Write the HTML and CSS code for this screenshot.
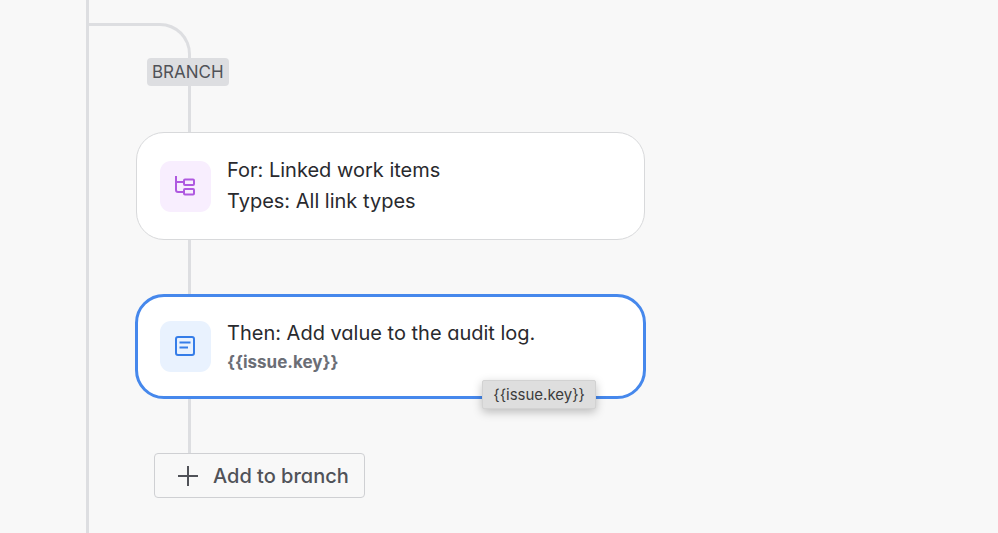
FILE: index.html
```html
<!DOCTYPE html>
<html lang="en">
<head>
    <meta charset="UTF-8">
    <meta name="viewport" content="width=device-width, initial-scale=1.0">
    <title>Automation rule</title>
    <link rel="stylesheet" href="styles.css">
</head>
<body>
    <main class="rule">
        <div class="branch-curve"></div>
        <div class="branch">
            <span class="branch-label">BRANCH</span>
            <div class="connector connector-short"></div>

            <section class="card">
                <div class="card-icon purple">
                    <svg width="21" height="21" viewBox="0 0 21 21" fill="none" stroke="currentColor" stroke-width="2">
                        <path d="M1 0v14a2 2 0 0 0 2 2h6M1 6h8"/>
                        <rect x="9" y="3.5" width="10" height="5.5" rx="1"/>
                        <rect x="9" y="13" width="10" height="5.5" rx="1"/>
                    </svg>
                </div>
                <div class="card-text">
                    <div class="card-title">For: Linked work items</div>
                    <div class="card-title">Types: All link types</div>
                </div>
            </section>

            <div class="connector"></div>

            <section class="card selected">
                <div class="card-icon blue">
                    <svg width="21" height="21" viewBox="0 0 21 21" fill="none" stroke="currentColor" stroke-width="2">
                        <rect x="1" y="1" width="18" height="18" rx="2"/>
                        <path d="M4.5 6.5h11M4.5 11.5h8.500"/>
                    </svg>
                </div>
                <div class="card-text">
                    <div class="card-title">Then: Add value to the audit log.</div>
                    <div class="card-detail">{{issue.key}}</div>
                </div>
                <div class="tooltip" role="tooltip">{{issue.key}}</div>
            </section>

            <div class="connector"></div>

            <button type="button" class="add-button">
                <svg width="22" height="22" viewBox="0 0 22 22" fill="none" stroke="currentColor" stroke-width="2">
                    <path d="M11 1v20M1 11h20"/>
                </svg>
                Add to branch
            </button>
        </div>
    </main>
</body>
</html>
```

FILE: styles.css
```css
* {
    box-sizing: border-box;
}

body {
    margin: 0;
    background: #f8f8f8;
    color: #292a2e;
    font-family: Inter, sans-serif;
    font-feature-settings: "cv11";
    font-size: 20px;
}

/* main line of the rule, the branch hangs off it */
.rule {
    min-height: 100vh;
    margin-left: 86px;
    padding: 23px 24px 24px 0;
    border-left: 3px solid #dddee1;
}

.branch-curve {
    width: 102px;
    height: 35px;
    border-top: 3px solid #dddee1;
    border-right: 3px solid #dddee1;
    border-top-right-radius: 31px;
}

.branch {
    display: flex;
    flex-direction: column;
    align-items: flex-start;
    padding-left: 47px;
}

.branch-label {
    margin-left: 11px;
    padding: 0 5px;
    border-radius: 4px;
    background: #dddee1;
    color: #505258;
    font-size: 17px;
    line-height: 28px;
}

.connector {
    width: 3px;
    height: 55px;
    margin-left: 52px;
    background: #dddee1;
}

.connector-short {
    height: 46px;
}

.card {
    position: relative;
    display: flex;
    align-items: center;
    gap: 16px;
    width: 100%;
    max-width: 509px;
    padding: 22px 23px;
    border: 1px solid #d8d9db;
    border-radius: 28px;
    background: #fff;
}

.selected {
    border-color: #4688ec;
    outline: 3px solid #4688ec;
    outline-offset: -2px;
}

.card-icon {
    display: flex;
    flex: none;
    align-items: center;
    justify-content: center;
    width: 51px;
    height: 51px;
    border-radius: 11px;
}

.purple {
    background: #f8eefe;
    color: #af59e0;
}

.blue {
    background: #e9f2fe;
    color: #357de8;
}

.card-title {
    line-height: 31px;
}

.card-detail {
    color: #6b6e76;
    font-size: 17px;
    font-weight: 700;
    line-height: 26px;
}

.tooltip {
    position: absolute;
    right: 48px;
    bottom: -12px;
    padding: 0 10px;
    border: 1px solid #d2d2d2;
    border-radius: 2px;
    background: #dedede;
    box-shadow: 0 3px 10px rgba(0, 0, 0, 0.25);
    color: #3c3c3c;
    font-size: 15px;
    line-height: 27px;
}

.add-button {
    display: flex;
    align-items: center;
    gap: 14px;
    height: 45px;
    margin-left: 18px;
    padding: 0 15px 0 22px;
    border: 1px solid #cfd0d3;
    border-radius: 4px;
    background: transparent;
    color: #505258;
    font: inherit;
    font-weight: 500;
    cursor: pointer;
}

.add-button:hover {
    background: #f0f1f2;
}
```
